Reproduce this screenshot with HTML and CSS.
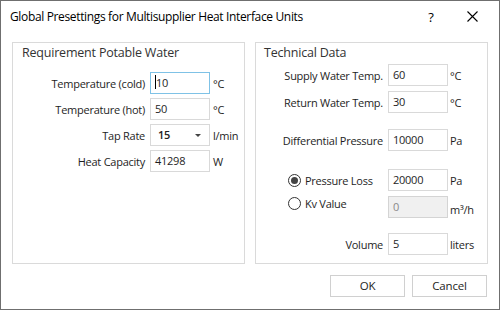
FILE: index.html
```html
<!DOCTYPE html>
<html lang="en">
  <head>
    <meta charset="utf-8">
    <title>Global Presettings</title>
    <link rel="stylesheet" href="styles.css">
  </head>
  <body>
    <div class="dialog">
      <div class="titlebar">
        <span class="title">Global Presettings for Multisupplier Heat Interface Units</span>
        <span class="help">?</span>
        <span class="close">
          <svg width="11" height="11" viewBox="0 0 11 11"><path d="M0.5 0.5 L10.5 10.5 M10.5 0.5 L0.5 10.5" stroke="#000" stroke-width="1.1" fill="none"/></svg>
        </span>
      </div>

      <div class="groups">
        <div class="group group-water">
          <div class="group-title">Requirement Potable Water</div>
          <div class="rows">
            <div class="row">
              <span class="label">Temperature (cold)</span>
              <div class="field field-focus"><span class="caret"></span>10</div>
              <span class="unit">°C</span>
            </div>
            <div class="row">
              <span class="label">Temperature (hot)</span>
              <div class="field">50</div>
              <span class="unit">°C</span>
            </div>
            <div class="row">
              <span class="label">Tap Rate</span>
              <div class="field combo"><span class="combo-value">15</span><span class="combo-arrow"></span></div>
              <span class="unit">l/min</span>
            </div>
            <div class="row">
              <span class="label">Heat Capacity</span>
              <div class="field">41298</div>
              <span class="unit">W</span>
            </div>
          </div>
        </div>

        <div class="group group-tech">
          <div class="group-title">Technical Data</div>
          <div class="rows">
            <div class="row">
              <span class="label">Supply Water Temp.</span>
              <div class="field">60</div>
              <span class="unit">°C</span>
            </div>
            <div class="row row-near">
              <span class="label">Return Water Temp.</span>
              <div class="field">30</div>
              <span class="unit">°C</span>
            </div>
            <div class="row row-pressure">
              <span class="label">Differential Pressure</span>
              <div class="field">10000</div>
              <span class="unit">Pa</span>
            </div>
            <div class="row row-loss">
              <label class="radio"><span class="radio-dot checked"></span>Pressure Loss</label>
              <div class="field">20000</div>
              <span class="unit">Pa</span>
            </div>
            <div class="row row-near">
              <label class="radio radio-top"><span class="radio-dot"></span>Kv Value</label>
              <div class="field disabled">0</div>
              <span class="unit unit-low">m³/h</span>
            </div>
            <div class="row row-volume">
              <span class="label">Volume</span>
              <div class="field">5</div>
              <span class="unit">liters</span>
            </div>
          </div>
        </div>
      </div>

      <div class="buttons">
        <button class="btn">OK</button>
        <button class="btn">Cancel</button>
      </div>
    </div>
  </body>
</html>
```

FILE: styles.css
```css
* {
    box-sizing: border-box;
}
body {
    margin: 0;
    background: #fff;
    font-family: "Open Sans", "Noto Sans", sans-serif;
    font-size: 11px;
    letter-spacing: -0.25px;
    color: #1e1e1e;
}
.dialog {
    width: 500px;
    height: 310px;
    border: 1px solid #6f6f6f;
    background: #fff;
    display: flex;
    flex-direction: column;
}

/* title bar */
.titlebar {
    height: 31px;
    display: flex;
    align-items: center;
    padding-left: 9px;
}
.title {
    font-size: 12px;
    letter-spacing: -0.35px;
    color: #000;
    flex: 1;
}
.help {
    font-size: 13px;
    width: 44px;
    text-align: center;
    color: #000;
}
.close {
    width: 46px;
    display: flex;
    justify-content: center;
    padding-right: 8px;
}
.close svg {
    display: block;
}

/* group boxes */
.groups {
    display: flex;
    gap: 10px;
    margin: 10px 11px 0 11px;
}
.group {
    width: 233px;
    height: 222px;
    border: 1px solid #dadada;
}
.group-title {
    font-size: 12.5px;
    letter-spacing: -0.2px;
    color: #333;
    line-height: 18px;
    padding-left: 9px;
    padding-top: 1px;
}
.group-tech .group-title {
    padding-left: 8px;
}
.rows {
    display: flex;
    flex-direction: column;
    gap: 4px;
}
.group-water .rows {
    margin-top: 10px;
}
.group-tech .rows {
    margin-top: 2px;
}
.row {
    display: grid;
    grid-template-columns: 132px 60px auto;
    column-gap: 5px;
    align-items: center;
    height: 22px;
}
.group-tech .row {
    grid-template-columns: 127px 60px auto;
    column-gap: 5px;
}
.row-near {
    margin-top: 1px;
}
.row-pressure {
    margin-top: 12px;
}
.row-loss {
    margin-top: 14px;
}
.row-volume {
    margin-top: 11px;
}
.label {
    text-align: right;
    white-space: nowrap;
}
.unit {
    margin-left: -2px;
    white-space: nowrap;
}
.group-tech .unit {
    margin-left: -3px;
}
.unit-low {
    padding-top: 4px;
}

/* text fields */
.field {
    height: 22px;
    border: 1px solid #d9d9d9;
    padding: 0 5px 2px 4px;
    display: flex;
    align-items: center;
    white-space: nowrap;
}
.field-focus {
    border-color: #7fc2e6;
}
.field.disabled {
    background: #f0f0f0;
    border-color: #d4d4d4;
    color: #8a8a8a;
}
.caret {
    display: inline-block;
    width: 1px;
    height: 14px;
    background: #000;
    margin-right: 0;
}
.combo {
    justify-content: space-between;
    padding-left: 7px;
}
.combo-value {
    font-weight: 600;
}
.combo-arrow {
    width: 0;
    height: 0;
    border-left: 3px solid transparent;
    border-right: 3px solid transparent;
    border-top: 3px solid #444;
    margin-right: 3px;
    margin-top: 2px;
}

/* radio buttons */
.radio {
    display: flex;
    align-items: center;
    gap: 4px;
    padding-left: 32px;
    white-space: nowrap;
}
.radio-top {
    align-self: start;
    padding-top: 0;
}
.radio-dot {
    width: 13px;
    height: 13px;
    border: 1px solid #333;
    border-radius: 50%;
    display: flex;
    align-items: center;
    justify-content: center;
}
.radio-dot.checked::after {
    content: "";
    width: 7px;
    height: 7px;
    border-radius: 50%;
    background: #444;
}

/* buttons */
.buttons {
    display: flex;
    justify-content: flex-end;
    gap: 7px;
    margin-top: 11px;
    padding-right: 12px;
}
.btn {
    width: 75px;
    height: 22px;
    background: #fff;
    border: 1px solid #d0d0d0;
    font-family: inherit;
    font-size: 11.5px;
    letter-spacing: -0.2px;
    color: #1e1e1e;
    padding: 0 0 2px 0;
}
```
